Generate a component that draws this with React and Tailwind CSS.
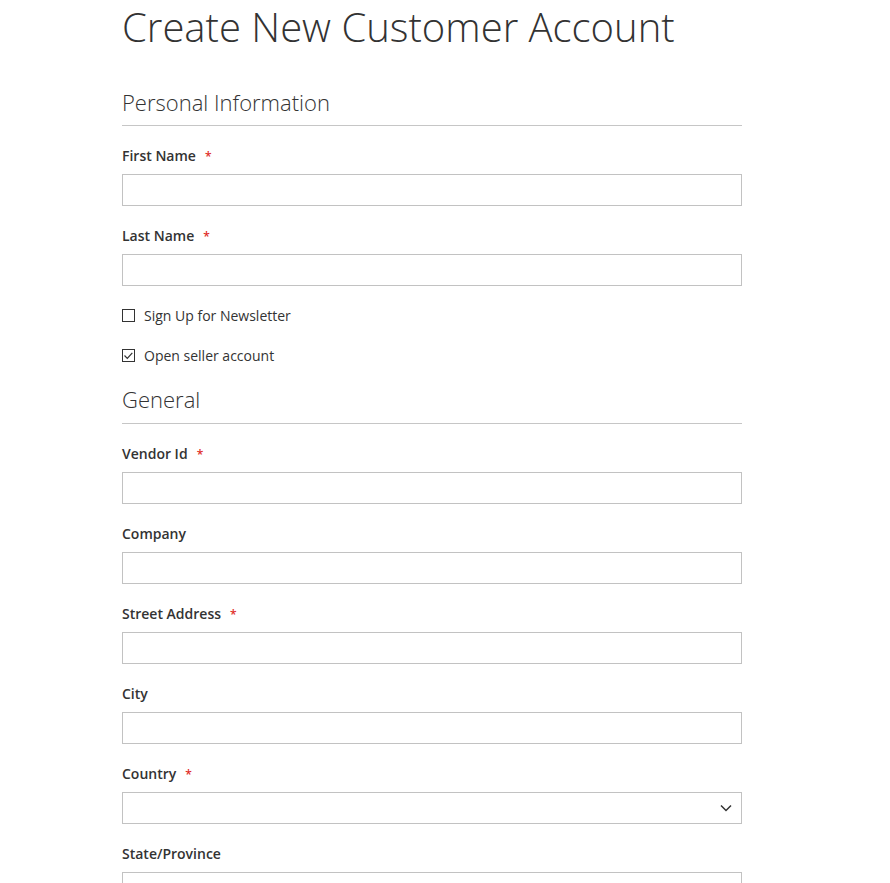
import React from 'react';

const Req = () => <span className="ml-[9px] text-[12px] leading-none text-[#e02b27]">*</span>;

const Label = ({ label, required }) => (
  <label className="block h-5 text-[14px] leading-5 font-semibold text-[#333]">
    {label}
    {required && <Req />}
  </label>
);

const Field = ({ label, required }) => (
  <div className="mb-5">
    <Label label={label} required={required} />
    <input
      type="text"
      className="mt-2 block w-full h-8 border border-[#c2c2c2] bg-white px-2 text-[14px] outline-none"
    />
  </div>
);

const SelectField = ({ label, required }) => (
  <div className="mb-5">
    <Label label={label} required={required} />
    <div className="mt-2 flex h-8 w-full items-center justify-end border border-[#c2c2c2] bg-white pr-[9px]">
      <svg width="12" height="8" viewBox="0 0 12 8" fill="none">
        <path d="M1 1.5l5 5 5-5" stroke="#333" strokeWidth="1.5" />
      </svg>
    </div>
  </div>
);

const Check = ({ label, checked, className = '' }) => (
  <div className={`flex items-center h-5 mb-5 ${className}`}>
    <span className="flex h-[13px] w-[13px] items-center justify-center border border-[#333] bg-white">
      {checked && (
        <svg width="11" height="11" viewBox="0 0 11 11" fill="none">
          <path d="M1.5 5.5l2.8 2.8 5-5.5" stroke="#333" strokeWidth="1.2" />
        </svg>
      )}
    </span>
    <span className="ml-[9px] text-[14px] text-[#333]">{label}</span>
  </div>
);

const Section = ({ title, className = '' }) => (
  <div className={`mb-5 border-b border-[#c6c6c6] ${className}`}>
    <h2 className="text-[22px] leading-7 font-light text-[#333]">{title}</h2>
  </div>
);

export default function App() {
  return (
    <div className="min-h-screen bg-white" style={{ fontFamily: '"Open Sans", "Liberation Sans", sans-serif' }}>
      <div className="ml-[122px] w-[620px] pt-[5px]">
        <h1 className="text-[40px] leading-[44px] font-light text-[#333] mb-[39px]">Create New Customer Account</h1>

        <Section title="Personal Information" className="pb-[9px]" />
        <Field label="First Name" required />
        <Field label="Last Name" required />
        <Check label="Sign Up for Newsletter" className="-mt-px" />
        <Check label="Open seller account" checked />

        <Section title="General" className="pb-[10px]" />
        <Field label="Vendor Id" required />
        <Field label="Company" />
        <Field label="Street Address" required />
        <Field label="City" />
        <SelectField label="Country" required />
        <Field label="State/Province" />
      </div>
    </div>
  );
}
